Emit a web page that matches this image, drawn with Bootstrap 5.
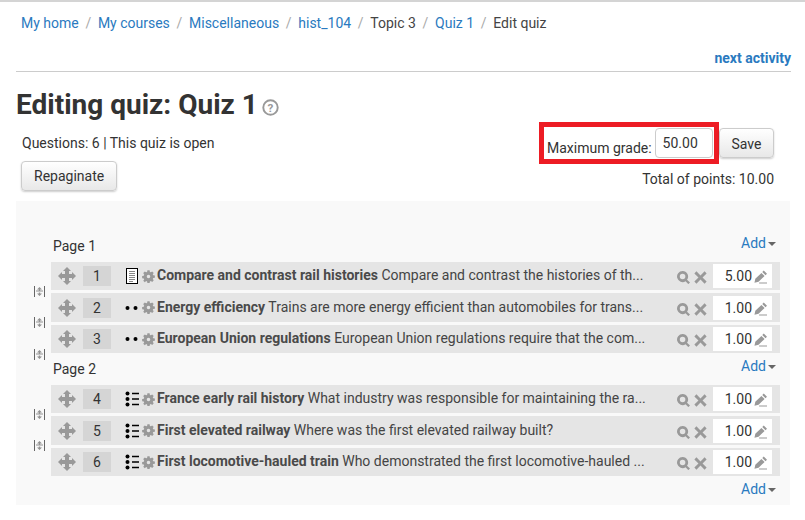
<!DOCTYPE html>
<html lang="en">
<head>
<meta charset="UTF-8">
<meta name="viewport" content="width=device-width, initial-scale=1.0">
<title>Editing quiz: Quiz 1</title>
<link href="https://cdn.jsdelivr.net/npm/bootstrap@5.3.5/dist/css/bootstrap.min.css" rel="stylesheet">
<style>
body {
    font-family: Roboto, "Liberation Sans", sans-serif;
    font-size: 14px;
    line-height: 20px;
    color: #333;
    background: #fff;
}
a { color: #2a7ac0; text-decoration: none; }
.page-wrap { border-top: 2px solid #d4d4d4; padding: 0 15px 0 16px; height: 518px; overflow: hidden; }
.crumbs { height: 40px; padding: 11px 0 0 5px; margin: 0; --bs-breadcrumb-divider-color: #aaa; --bs-breadcrumb-item-padding-x: 6.7px; --bs-breadcrumb-margin-bottom: 0; --bs-breadcrumb-item-active-color: #444; }
.next-row { height: 30px; padding-top: 6px; text-align: right; border-bottom: 1px solid #ccc; font-weight: 700; margin-right: -1px; }
.quiz-title { font-size: 28px; line-height: 34px; font-weight: 700; margin: 16px 0 0; color: #333; }
.head-area { height: 77px; }
.status { padding: 11px 0 0 6px; line-height: 20px; }
.old-btn { font-size: 14px; line-height: 20px; padding: 4px 12px; color: #333; background: linear-gradient(#fff, #e8e8e8); border: 1px solid #ccc; border-radius: 4px; box-shadow: 0 1px 2px rgba(0,0,0,.2); }
.repag { margin: 8px 0 0 5px; height: 30px; width: 96px; }
.grade-side { width: 235px; margin-right: 16px; }
.grade-box { border: 5px solid #ed1c24; width: 180px; height: 42px; padding-left: 3px; display: flex; align-items: flex-end; gap: 3px; flex: none; }
.grade-box label { line-height: 20px; padding-bottom: 1px; white-space: nowrap; }
.grade-input { width: 58px; height: 30px; margin-bottom: 1px; border: 1px solid #ccc; border-radius: 4px; padding: 0 0 0 7px; font: inherit; color: #333; background: #fff; }
.save-btn { width: 55px; height: 30px; margin-top: 6px; padding: 1px 0 0; }
.total { text-align: right; margin-top: 5px; line-height: 20px; }
.slots-panel { background: #f9f9f9; height: 304px; padding: 32px 10px 0 35px; margin-top: 2px; }
.page-head { display: flex; justify-content: space-between; align-items: flex-start; height: 29px; padding: 0 4px 0 2px; }
.page-label { padding-top: 3px; }
.add-link { display: inline-flex; align-items: center; gap: 2px; }
.add-link::after { content: ""; border: 4px solid transparent; border-top-color: #666; border-bottom: 0; margin-top: 1px; }
.add-last { margin-top: -1px; }
.slot { position: relative; display: flex; align-items: center; background: #e5e5e5; margin-bottom: 3px; height: 28px; }
.slot.tall { height: 29px; }
.move-ico { width: 18px; height: 18px; margin-left: 7px; color: #999; flex: none; }
.slot-no { width: 28px; height: 20px; line-height: 20px; background: #d5d5d5; text-align: center; margin-left: 7px; flex: none; }
.type-ico { width: 14px; height: 16px; margin-left: 14px; flex: none; }
.gear-ico { width: 13px; height: 13px; margin-left: 3px; flex: none; color: #999; }
.slot-text { width: 522px; white-space: nowrap; overflow: hidden; flex: none; padding: 0 0 2px 2px; color: #444; }
.slot-text b { color: #4a4a4a; }
.act-ico { width: 13px; height: 13px; color: #999; flex: none; margin-top: 3px; }
.mark-box { width: 59px; height: 24px; background: #fff; margin-left: 6px; display: flex; align-items: center; justify-content: flex-end; padding-right: 5px; flex: none; }
.pen-ico { width: 13px; height: 14px; margin-left: 2px; margin-top: 2px; color: #999; }
.split-ico { position: absolute; left: -17px; width: 11px; height: 11px; color: #666; }
</style>
</head>
<body>
<svg width="0" height="0" class="d-none">
  <symbol id="i-move" viewBox="0 0 18 18"><path fill="currentColor" d="M9 0l4 4h-2v3h3V5l4 4-4 4v-2h-3v3h2l-4 4-4-4h2v-3H4v2L0 9l4-4v2h3V4H5z"/></symbol>
  <symbol id="i-gear" viewBox="-.8 -.4 17.600 17.600"><path fill="currentColor" fill-rule="evenodd" d="M6.500 0h3l.4 2.200 1.300.6L13 1.500l2.100 2.100-1.300 1.800.6 1.300 2.200.4v3l-2.200.4-.6 1.300 1.300 1.800-2.100 2.100-1.800-1.300-1.300.6-.4 2.200h-3l-.4-2.200-1.300-.6L3 16.300.9 14.200l1.300-1.800-.6-1.300-2.200-.4v-3l2.200-.4.6-1.300L.9 3.600 3 1.500l1.800 1.300 1.300-.6zM8 6a2.400 2.400 0 1 0 0 4.800A2.400 2.400 0 0 0 8 6z"/></symbol>
  <symbol id="i-search" viewBox="0 0 14 14"><path fill="currentColor" fill-rule="evenodd" d="M6 0a6 6 0 0 1 4.800 9.500l3.200 2.800-1.800 1.800-3-3A6 6 0 1 1 6 0zm0 3a3 3 0 1 0 0 6 3 3 0 0 0 0-6z"/></symbol>
  <symbol id="i-x" viewBox="0 0 14 14"><path fill="currentColor" d="M2.600.4L7 4.800 11.400.4l2.200 2.200L9.200 7l4.400 4.400-2.200 2.200L7 9.200l-4.400 4.400-2.200-2.200L4.800 7 .4 2.600z"/></symbol>
  <symbol id="i-pen" viewBox="0 0 14 14"><path fill="currentColor" d="M10.500 0L14 3.400l-1.600 1.700-3.500-3.500zM8 2.600l3.400 3.400-6.500 6.100-4.400 1 .9-4.200zM5.500 13h8.500v1H5.500z"/></symbol>
  <symbol id="i-split" viewBox="0 0 11 11"><path fill="none" stroke="currentColor" d="M.5 0v11M10.500 0v11"/><path fill="currentColor" opacity=".7" d="M5.500 1L8 3.500H6.200V4.500H9v1H2v-1h2.800V3.500H3zM5.500 10L3 7.500h1.800V6.500h1.400v1H8z"/></symbol>
  <symbol id="i-essay" viewBox="0 0 12 16"><rect x=".5" y=".5" width="11" height="15" fill="#fff" stroke="#000"/><path stroke="#888" d="M3 3.500h6M3 5.500h6M3 7.500h6M3 9.500h6M3 11.500h6M3 13.500h4"/></symbol>
  <symbol id="i-tf" viewBox="0 0 14 16"><circle cx="2.500" cy="8" r="2" fill="#000"/><circle cx="10.500" cy="8" r="2" fill="#000"/></symbol>
  <symbol id="i-multi" viewBox="0 0 14 16"><circle cx="2.500" cy="2.500" r="2" fill="#000"/><circle cx="2.500" cy="8" r="2" fill="#000"/><circle cx="2.500" cy="13.500" r="2" fill="#000"/><path stroke="#000" stroke-width="1.300" d="M7 2.500h7M7 8h7M7 13.500h7"/></symbol>
</svg>

<div class="page-wrap">
  <ol class="breadcrumb crumbs">
    <li class="breadcrumb-item"><a href="#">My home</a></li>
    <li class="breadcrumb-item"><a href="#">My courses</a></li>
    <li class="breadcrumb-item"><a href="#">Miscellaneous</a></li>
    <li class="breadcrumb-item"><a href="#">hist_104</a></li>
    <li class="breadcrumb-item active">Topic 3</li>
    <li class="breadcrumb-item"><a href="#">Quiz 1</a></li>
    <li class="breadcrumb-item active">Edit quiz</li>
  </ol>
  <div class="next-row"><a href="#">next activity</a></div>

  <h2 class="quiz-title d-flex align-items-center gap-1">Editing quiz: Quiz 1
    <svg width="17" height="17" viewBox="0 0 16 16" class="mt-1"><circle cx="8" cy="8" r="6.800" fill="none" stroke="#999" stroke-width="1.800"/><text x="8" y="12" text-anchor="middle" font-size="11" font-weight="700" fill="#999" font-family="Roboto, sans-serif">?</text></svg>
  </h2>

  <div class="head-area d-flex justify-content-between">
    <div>
      <div class="status">Questions: 6 | This quiz is open</div>
      <button type="button" class="btn old-btn repag">Repaginate</button>
    </div>
    <div class="grade-side">
      <div class="d-flex">
        <div class="grade-box">
          <label for="maxgrade">Maximum grade:</label>
          <input id="maxgrade" class="grade-input" type="text" value="50.00">
        </div>
        <button type="button" class="btn old-btn save-btn">Save</button>
      </div>
      <div class="total">Total of points: 10.00</div>
    </div>
  </div>

  <div class="slots-panel">
    <div class="page-head"><span class="page-label">Page 1</span><a href="#" class="add-link">Add</a></div>

    <div class="slot">
      <svg class="move-ico"><use href="#i-move"/></svg><span class="slot-no">1</span>
      <svg class="type-ico"><use href="#i-essay"/></svg><svg class="gear-ico"><use href="#i-gear"/></svg>
      <div class="slot-text"><b>Compare and contrast rail histories</b> Compare and contrast the histories of th...</div>
      <svg class="act-ico me-1"><use href="#i-search"/></svg><svg class="act-ico"><use href="#i-x"/></svg>
      <div class="mark-box">5.00<svg class="pen-ico"><use href="#i-pen"/></svg></div>
      <svg class="split-ico" style="top:24px"><use href="#i-split"/></svg>
    </div>
    <div class="slot tall">
      <svg class="move-ico"><use href="#i-move"/></svg><span class="slot-no">2</span>
      <svg class="type-ico"><use href="#i-tf"/></svg><svg class="gear-ico"><use href="#i-gear"/></svg>
      <div class="slot-text"><b>Energy efficiency</b> Trains are more energy efficient than automobiles for trans...</div>
      <svg class="act-ico me-1"><use href="#i-search"/></svg><svg class="act-ico"><use href="#i-x"/></svg>
      <div class="mark-box">1.00<svg class="pen-ico"><use href="#i-pen"/></svg></div>
      <svg class="split-ico" style="top:24px"><use href="#i-split"/></svg>
    </div>
    <div class="slot">
      <svg class="move-ico"><use href="#i-move"/></svg><span class="slot-no">3</span>
      <svg class="type-ico"><use href="#i-tf"/></svg><svg class="gear-ico"><use href="#i-gear"/></svg>
      <div class="slot-text"><b>European Union regulations</b> European Union regulations require that the com...</div>
      <svg class="act-ico me-1"><use href="#i-search"/></svg><svg class="act-ico"><use href="#i-x"/></svg>
      <div class="mark-box">1.00<svg class="pen-ico"><use href="#i-pen"/></svg></div>
      <svg class="split-ico" style="top:24px"><use href="#i-split"/></svg>
    </div>

    <div class="page-head"><span class="page-label">Page 2</span><a href="#" class="add-link">Add</a></div>

    <div class="slot">
      <svg class="move-ico"><use href="#i-move"/></svg><span class="slot-no">4</span>
      <svg class="type-ico"><use href="#i-multi"/></svg><svg class="gear-ico"><use href="#i-gear"/></svg>
      <div class="slot-text"><b>France early rail history</b> What industry was responsible for maintaining the ra...</div>
      <svg class="act-ico me-1"><use href="#i-search"/></svg><svg class="act-ico"><use href="#i-x"/></svg>
      <div class="mark-box">1.00<svg class="pen-ico"><use href="#i-pen"/></svg></div>
      <svg class="split-ico" style="top:24px"><use href="#i-split"/></svg>
    </div>
    <div class="slot tall">
      <svg class="move-ico"><use href="#i-move"/></svg><span class="slot-no">5</span>
      <svg class="type-ico"><use href="#i-multi"/></svg><svg class="gear-ico"><use href="#i-gear"/></svg>
      <div class="slot-text"><b>First elevated railway</b> Where was the first elevated railway built?</div>
      <svg class="act-ico me-1"><use href="#i-search"/></svg><svg class="act-ico"><use href="#i-x"/></svg>
      <div class="mark-box">1.00<svg class="pen-ico"><use href="#i-pen"/></svg></div>
      <svg class="split-ico" style="top:24px"><use href="#i-split"/></svg>
    </div>
    <div class="slot">
      <svg class="move-ico"><use href="#i-move"/></svg><span class="slot-no">6</span>
      <svg class="type-ico"><use href="#i-multi"/></svg><svg class="gear-ico"><use href="#i-gear"/></svg>
      <div class="slot-text"><b>First locomotive-hauled train</b> Who demonstrated the first locomotive-hauled ...</div>
      <svg class="act-ico me-1"><use href="#i-search"/></svg><svg class="act-ico"><use href="#i-x"/></svg>
      <div class="mark-box">1.00<svg class="pen-ico"><use href="#i-pen"/></svg></div>
    </div>

    <div class="text-end pe-1"><a href="#" class="add-link add-last">Add</a></div>
  </div>
</div>

<script src="https://cdn.jsdelivr.net/npm/bootstrap@5.3.5/dist/js/bootstrap.bundle.min.js"></script>
</body>
</html>
